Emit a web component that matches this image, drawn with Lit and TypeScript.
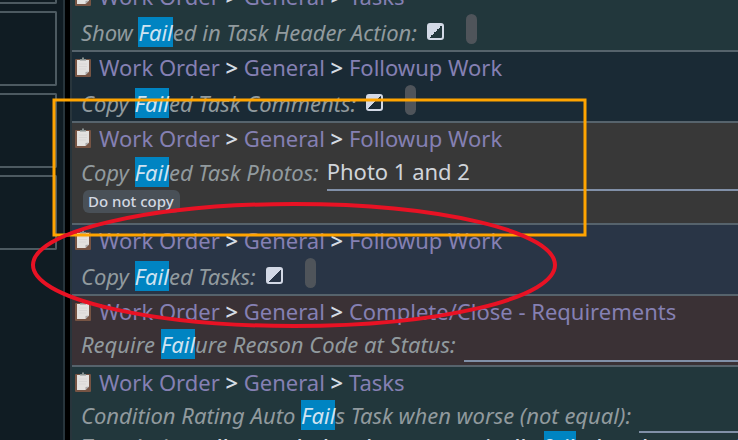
import { LitElement, html, css, svg, nothing } from "lit";
import { customElement, property } from "lit/decorators.js";

type Field = {
  tone: string;
  path: string[];
  before: string;
  match: string;
  after: string;
  kind: "check" | "text" | "text tagged";
  value?: string;
  tag?: string;
  note?: boolean;
};

const fields: Field[] = [
  { tone: "teal", path: ["Work Order", "General", "Tasks"], before: "Show ", match: "Fail", after: "ed in Task Header Action:", kind: "check" },
  { tone: "navy", path: ["Work Order", "General", "Followup Work"], before: "Copy ", match: "Fail", after: "ed Task Comments:", kind: "check" },
  { tone: "gray", path: ["Work Order", "General", "Followup Work"], before: "Copy ", match: "Fail", after: "ed Task Photos:", kind: "text tagged", value: "Photo 1 and 2", tag: "Do not copy" },
  { tone: "blue", path: ["Work Order", "General", "Followup Work"], before: "Copy ", match: "Fail", after: "ed Tasks:", kind: "check" },
  { tone: "plum", path: ["Work Order", "General", "Complete/Close - Requirements"], before: "Require ", match: "Fail", after: "ure Reason Code at Status:", kind: "text" },
  { tone: "teal", path: ["Work Order", "General", "Tasks"], before: "Condition Rating Auto ", match: "Fail", after: "s Task when worse (not equal):", kind: "text", note: true },
];

@customElement("setting-row")
export class SettingRow extends LitElement {
  @property({ attribute: false }) field!: Field;

  static styles = css`
    :host { display: block; }
    .row { border-bottom: 2px solid #56636c; padding-left: 3px; }
    .teal { background: #22373c; }
    .navy { background: #1a2a35; }
    .gray { background: #383838; }
    .blue { background: #293546; }
    .plum { background: #3a3135; }
    .crumbs { display: flex; align-items: center; height: 30px; white-space: pre; color: #d5dbe4; font-weight: 600; }
    .icon { width: 16px; height: 20px; margin-right: 8px; flex: none; }
    a { color: #8580b3; text-decoration: none; font-weight: 400; }
    .line { display: flex; align-items: center; height: 39px; box-sizing: border-box; padding-left: 6px; gap: 8px; }
    .text { padding-bottom: 3px; }
    .tagged { padding-bottom: 1px; }
    .check { padding-top: 2px; }
    label { color: #919a9e; font-style: italic; white-space: pre; line-height: 30px; }
    mark { display: inline-block; background: #0084c2; color: #cfe3f1; line-height: 30px; }
    .box { appearance: none; width: 17px; height: 17px; margin: 0 0 0 2px; border: 2px solid #d3d9e6; border-radius: 3px;
      background: linear-gradient(135deg, #d3d9e6 50%, transparent 50%); }
    .pill { width: 11px; height: 30px; border-radius: 6px; background: #4f545a; margin: 0 0 6px 14px; }
    .entry { flex: 1; min-width: 0; align-self: stretch; box-sizing: border-box; background: none; border: 0; border-bottom: 2px solid #8190a8;
      padding: 0; color: #d0d4da; font: inherit; outline: none; }
    .tags { padding: 0 0 10px 8px; margin-top: -2px; }
    .tag { display: block; font: 500 15px/23px "Noto Sans", sans-serif; color: #d3d8e2; background: #495057; border: 0; border-radius: 6px; padding: 0 6px 0 5px; height: 23px; }
    .note { margin: -5px 0 0; padding-left: 6px; color: #d5dbe4; font-weight: 500; white-space: pre; line-height: 30px; }
    .note span { color: #919a9e; font-style: italic; }
  `;

  render() {
    const f = this.field;
    return html`<section class="row ${f.tone}">
      <nav class="crumbs">${svg`<svg class="icon" viewBox="0 0 16 20" aria-hidden="true">
          <rect x="0" y="2" width="16" height="18" rx="1" fill="#765444"/>
          <path d="M2 3H14V14.500L10.500 18H2Z" fill="#e3e1df"/>
          <path d="M14 14.500L10.500 18V15Z" fill="#aaa9aa"/>
          <path d="M4 7H12M4 9.500H12M4 12H11" stroke="#d9d7d6" stroke-width="1"/>
          <path d="M5 3.500V2H7V0.500H9V2H11V3.500Z" fill="#87908f"/>
        </svg>`}${f.path.map((p, i) => html`${i ? " > " : nothing}<a href="#">${p}</a>`)}</nav>
      <div class="line ${f.kind}"><label for="control">${f.before}<mark>${f.match}</mark>${f.after}</label>${f.kind === "check"
        ? html`<input id="control" class="box" type="checkbox"><span class="pill"></span>`
        : html`<input id="control" class="entry" type="text" .value=${f.value ?? ""}>`}</div>
      ${f.tag ? html`<div class="tags"><button class="tag">${f.tag}</button></div>` : nothing}
      ${f.note ? html`<p class="note"><span>Translation:</span> all recorded tasks automatically <mark>fail</mark>ed and are marked</p>` : nothing}
    </section>`;
  }
}

@customElement("app-root")
export class AppRoot extends LitElement {
  static styles = css`
    :host { display: block; position: relative; height: 100vh; overflow: hidden; background: #101c23; font: 22px/30px "Noto Sans", sans-serif; }
    .layout { display: grid; grid-template-columns: 57px 8px 5px 1fr; height: 100%; }
    .side { display: flex; flex-direction: column; gap: 7px; margin-top: -71px; }
    .card { height: 75px; box-sizing: border-box; border: 2px solid #4d5a61; border-left: 0; border-radius: 0 2px 2px 0; flex: none; }
    .gutter { border-right: 2px solid #28353c; }
    .split { background: #000; }
    .list { border-left: 2px solid #28353c; margin-top: -19px; min-width: 0; }
    .marks { position: absolute; left: 0; top: 0; width: 738px; height: 440px; pointer-events: none; }
  `;

  render() {
    return html`<main class="layout">
        <aside class="side">${[0, 1, 2, 3].map(() => html`<div class="card"></div>`)}</aside>
        <div class="gutter"></div>
        <div class="split"></div>
        <div class="list">${fields.map((f) => html`<setting-row .field=${f}></setting-row>`)}</div>
      </main>
      <svg class="marks" viewBox="0 0 738 440" aria-hidden="true">
        <rect x="54" y="100" width="531" height="135" fill="none" stroke="#ffa400" stroke-width="3"/>
        <ellipse cx="294" cy="265" rx="261" ry="61" fill="none" stroke="#e81224" stroke-width="4"/>
      </svg>`;
  }
}
